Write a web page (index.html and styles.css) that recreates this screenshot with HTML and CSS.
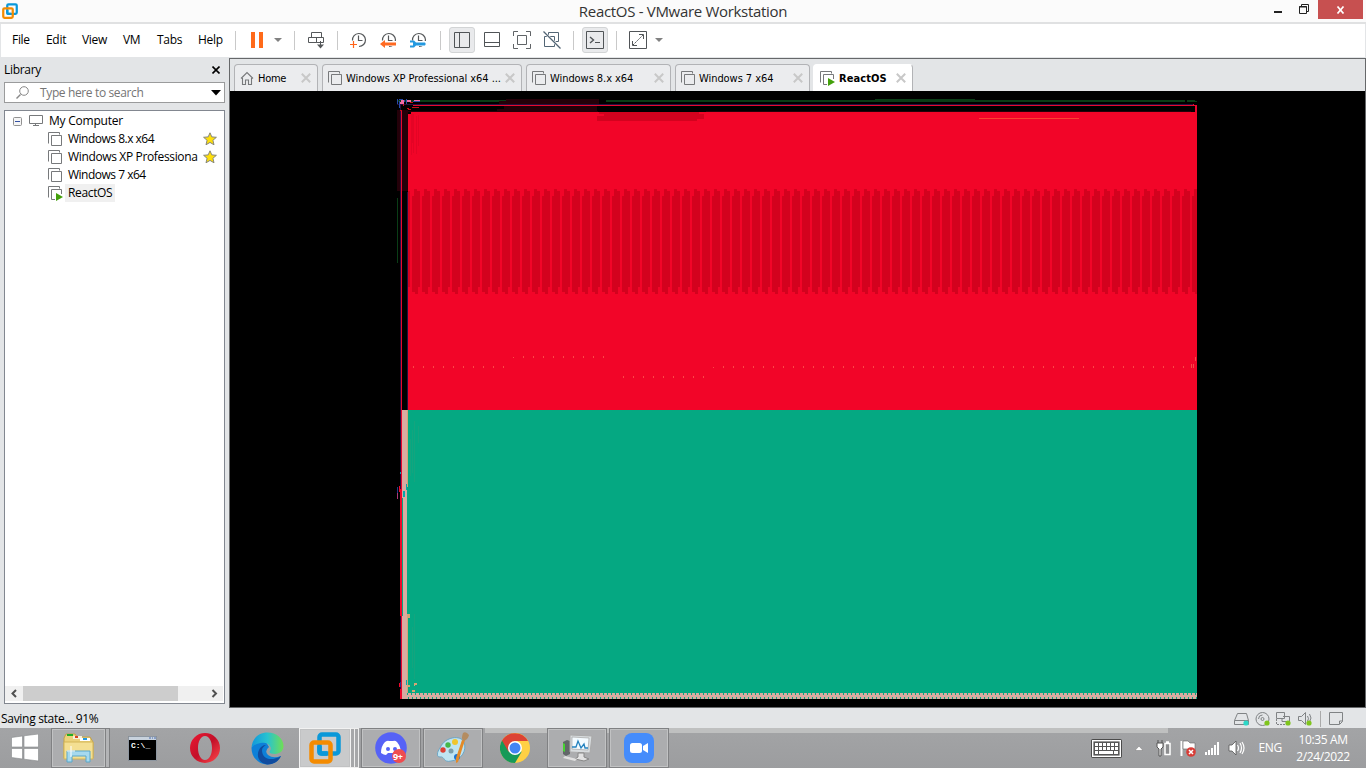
FILE: index.html
```html
<!DOCTYPE html>
<html lang="en">
<head>
<meta charset="utf-8">
<title>ReactOS - VMware Workstation</title>
<link rel="stylesheet" href="styles.css">
</head>
<body>
<svg class="defs" width="0" height="0" aria-hidden="true">
  <symbol id="vm" viewBox="0 0 15 15"><path d="M.5 11.5V.5h11v2M3.500 3.500h10v10h-10z" fill="none" stroke="#77797b"/></symbol>
  <symbol id="vmrun" viewBox="0 0 15 15"><path d="M.5 11.500V.5h11v2M7 13.500H3.500v-10h10V8" fill="none" stroke="#77797b"/><path d="M8 7l7 4-7 4z" fill="#43a00b"/></symbol>
  <symbol id="x" viewBox="0 0 10 10"><path d="M.8.8l8.400 8.400M9.200.8L.8 9.200" stroke="#c8c8c8" stroke-width="2"/></symbol>
  <symbol id="star" viewBox="0 0 14 14"><path d="M7 .8l1.800 4.100 4.600.4-3.500 3 1.100 4.500L7 10.400 3 12.800l1.100-4.500-3.500-3 4.600-.4z" fill="#ffdf0b" stroke="#85867a" stroke-width="1"/></symbol>
  <symbol id="logo" viewBox="0 0 32 32"><g fill="none" stroke-width="4.500"><rect x="10.500" y="2.500" width="19" height="19" rx="2.500" stroke="#0a98d9"/><rect x="2.500" y="10.500" width="19" height="19" rx="2.500" stroke="#f48b00"/><path d="M10.500 14v6q0 1.500 1.500 1.500h6" stroke="#0a98d9"/></g></symbol>
  <symbol id="clock" viewBox="0 0 17 17"><path d="M2.500 8.500A6.500 6.500 0 1 1 9 14.500M8.500 3.500v5h4" fill="none" stroke="#55585a" stroke-width="1.200"/></symbol>
</svg>

<header class="titlebar">
  <svg class="app-icon" width="16" height="16"><use href="#logo"/></svg>
  <span class="title">ReactOS - VMware Workstation</span>
  <svg class="win-min" width="8" height="3"><path d="M0 0h8v2H0z" fill="#222"/></svg>
  <svg class="win-max" width="10" height="10"><path d="M.5 2.500h7v7h-7zM0 3h8M2.500 2V.5h7v7H8" fill="none" stroke="#222"/></svg>
  <span class="win-close"><svg width="9" height="8"><path d="M1.500 .5l6 7M7.500 .5l-6 7" stroke="#fff" stroke-width="1.700"/></svg></span>
</header>

<nav class="menubar">
  <div class="menus"><span class="m-file">File</span><span class="m-edit">Edit</span><span class="m-view">View</span><span class="m-vm">VM</span><span class="m-tabs">Tabs</span><span>Help</span></div>
  <i class="sep first"></i>
  <svg class="g15" width="12" height="16"><path d="M0 0h4v16H0zM8 0h4v16H8z" fill="#ff6a1a"/></svg>
  <svg class="g11" width="8" height="4"><path d="M0 0h8L4 4z" fill="#818181"/></svg>
  <i class="sep"></i>
  <svg class="g13" width="17" height="17"><path d="M3.500.5h10v5h-10zM.5 5.500h8v5h-8zM8.500 5.500h7v5h-7zM12.500 9v6" fill="none" stroke="#55585a"/><path d="M9 12.500h7l-3.500 4z" fill="#55585a"/></svg>
  <i class="sep"></i>
  <svg class="clock" width="17" height="17"><use href="#clock"/><path d="M3.500 9v7M0 12.500h7" stroke="#ff6318" stroke-width="1.200"/></svg>
  <svg class="g13" width="17" height="17"><use href="#clock"/><path d="M0 9h17v5H0z" fill="#fff"/><path d="M0 12L5 8v2.500h11v3H5V16z" fill="#ff6a22"/></svg>
  <svg class="g13" width="17" height="17"><use href="#clock"/><path d="M0 9h17v5H0z" fill="#fff"/><path d="M0 8.500h4l2 2h9q1.500 1.500 0 3H6l-2 2H0v-2h3v-3H0z" fill="#2499e0"/></svg>
  <i class="sep g13"></i>
  <span class="tool-on g8"><svg width="16" height="16"><path d="M.5.500h15v15H.5zM5.500 1v14" fill="none" stroke="#505457"/></svg></span>
  <svg class="g9" width="17" height="16"><path d="M.5.500h15v14H.5zM1 10.500h14" fill="none" stroke="#505457"/></svg>
  <svg class="g12" width="18" height="18"><path d="M.5 5V.5H5M13 .5h4.500V5M17.500 13v4.500H13M5 17.500H.5V13M4.500 4.500h9v9h-9z" fill="none" stroke="#606467"/></svg>
  <svg class="g12" width="18" height="18"><path d="M5.500 1.500h10v9h-3M1.500 5.500h10v10h-10zM5.500 5V1.500" fill="none" stroke="#526574"/><path d="M.5.500l17 17" stroke="#fff" stroke-width="2.500"/><path d="M.5.500l17 17" stroke="#526574" stroke-width="1.200"/></svg>
  <i class="sep"></i>
  <span class="tool-on g8"><svg width="18" height="18"><path d="M.5.500h17v17H.5zM9 11.500h5" fill="none" stroke="#505457"/><path d="M4 6l3.500 3L4 12" fill="none" stroke="#505457" stroke-width="1.400"/></svg></span>
  <i class="sep g8"></i>
  <svg class="g12" width="18" height="18"><path d="M.5.500h17v17H.5z" fill="none" stroke="#505457"/><path d="M4 14L14 4" stroke="#505457" stroke-dasharray="2 1"/><path d="M3.500 10v4.500H8M10 3.500h4.500V8" fill="none" stroke="#505457"/></svg>
  <svg class="g8" width="8" height="4"><path d="M0 0h8L4 4z" fill="#818181"/></svg>
</nav>

<main class="workspace">
  <aside class="library">
    <div class="lib-head"><span>Library</span><svg width="8" height="8"><path d="M.5.500l7 7M7.500.500l-7 7" stroke="#000" stroke-width="1.600"/></svg></div>
    <div class="search"><svg width="13" height="13"><path d="M4.500 8.500L.5 12.500" stroke="#888" stroke-width="1.400"/><circle cx="8" cy="5" r="4.300" fill="none" stroke="#888"/></svg><span>Type here to search</span><svg width="10" height="6"><path d="M0 0h10L5 5.500z"/></svg></div>
    <div class="tree">
      <div class="node root"><svg width="9" height="9"><rect x=".5" y=".5" width="8" height="8" rx="1" fill="#f5f5f5" stroke="#919191"/><path d="M2 4.500h5" stroke="#3451a4"/></svg><svg class="pc" width="14" height="12"><path d="M.5.500h13v8H.5zM6.500 9v2M4 10.500h6" fill="none" stroke="#77797b"/></svg><span>My Computer</span></div>
      <div class="node tight"><svg width="15" height="15"><use href="#vm"/></svg><span>Windows 8.x x64</span><svg class="fav" width="14" height="14"><use href="#star"/></svg></div>
      <div class="node"><svg width="15" height="15"><use href="#vm"/></svg><span class="long">Windows XP Professiona</span><svg class="fav" width="14" height="14"><use href="#star"/></svg></div>
      <div class="node tight"><svg width="15" height="15"><use href="#vm"/></svg><span>Windows 7 x64</span></div>
      <div class="node"><svg width="15" height="15"><use href="#vmrun"/></svg><span class="selected">ReactOS</span></div>
      <div class="hscroll"><svg width="18" height="15"><path d="M11 4L7.500 7.500l3.500 3.500" fill="none" stroke="#505050" stroke-width="2"/></svg><i class="thumb"></i><svg width="18" height="15"><path d="M7.500 4L11 7.500 7.500 11" fill="none" stroke="#505050" stroke-width="2"/></svg></div>
    </div>
  </aside>

  <section class="viewer">
    <div class="tabs">
      <div class="tab home"><svg width="14" height="14"><path d="M1 7.500l6-6 6 6M2.500 7v6.500h3V9h3v4.500h3V7" fill="none" stroke="#77797b" stroke-width="1.100"/></svg><span>Home</span><svg width="10" height="10"><use href="#x"/></svg></div>
      <div class="tab xp"><svg width="15" height="15"><use href="#vm"/></svg><span>Windows XP Professional x64 ...</span><svg width="10" height="10"><use href="#x"/></svg></div>
      <div class="tab w8"><svg width="15" height="15"><use href="#vm"/></svg><span>Windows 8.x x64</span><svg width="10" height="10"><use href="#x"/></svg></div>
      <div class="tab w7"><svg width="15" height="15"><use href="#vm"/></svg><span>Windows 7 x64</span><svg width="10" height="10"><use href="#x"/></svg></div>
      <div class="tab active"><svg width="15" height="15"><use href="#vmrun"/></svg><span>ReactOS</span><svg width="10" height="10"><use href="#x"/></svg></div>
    </div>
    <svg class="display" width="1135" height="616" viewBox="230 91 1135 616" shape-rendering="crispEdges">
      <defs>
        <pattern id="bars" x="402" y="0" width="10" height="768" patternUnits="userSpaceOnUse"><path d="M2 189h3v2h3v96h-2v7H3v-2H0v-96h2z" fill="#d3021e"/></pattern>
        <pattern id="dots" x="403" y="0" width="10" height="768" patternUnits="userSpaceOnUse"><path d="M0 0h1v768H0z" fill="#fa4848"/></pattern>
        <pattern id="teeth" x="407" y="693" width="4" height="6" patternUnits="userSpaceOnUse"><path d="M0 0h4v6H0z" fill="#daaba1"/><path d="M0 0h1v2H0zM1 4h1v2H1z" fill="#05a882"/></pattern>
      </defs>
      <path d="M230 91h1135v616H230z"/>
      <path d="M397 100h109v1h-7v1H397zM606 100h269v-1h100v1h210v2H606zM1187 100h8v1h2v1h-10zM397 198h1v65h-1z" fill="#0a3d16"/>
      <path d="M506 99h93v5H499v-3h7zM504 106h93v5H497v-2h7zM397 110h11v81H397zM408 111h190v1H408zM706 111h485v1H706z" fill="#240009"/>
      <path d="M397 104h797v1H397zM400 105h1v594h-1zM407 192h1v218h-1z" fill="#24103f"/>
      <path d="M413 105h784v7h-2v-6H413zM401 110h1v589h-1zM1193 104h1v1h-1z" fill="#e7082e"/>
      <path d="M402 192h5v218h-5z"/>
      <path d="M411 112h786v298H408V114h3z" fill="#f20528"/>
      <path d="M599 112h100v2h5v5h-7v2H597v-5h7v-2h-5z" fill="#d3021e"/>
      <path d="M411 114h3v39h-1v-10h-1v12h-1zM416 116h1v38h-1zM418 115h1v31h-1z" fill="#e40425"/>
      <path d="M408 189h789v105H408z" fill="url(#bars)"/>
      <path d="M979 118h100v1H979z" fill="#fb4131"/>
      <path d="M413 366h91v2h-91zM513 357h1v1h-1zM523 356h81v2h-81zM623 376h81v2h-81zM713 367h1v1h-1zM723 366h462v2H723z" fill="url(#dots)"/>
      <path d="M1191 364h1v4h-1zM1193 364h1v4h-1zM1195 357h1v4h-1z" fill="#fa4848"/>
      <path d="M408 410h789v283H408zM402 487h6v206h-6z" fill="#05a882"/>
      <path d="M414 421h1v61h-1zM412 430h1v43h-1zM418 426h1v17h-1zM410 439h1v37h-1zM414 614h1v65h-1zM412 627h1v41h-1z" fill="#15a47e"/>
      <path d="M402 410h6v77h-1v212h-5v-83h1V498h-1z" fill="#daaba1"/>
      <path d="M407 614h3v4h-3z" fill="#d4a574"/>
      <path d="M407 693h790v6H407z" fill="url(#teeth)"/>
      <path d="M407 410h1v77h-1zM407 618h1v75h-1zM414 683h3v2h-2v1h-1zM412 690h3v2h-3zM407 685h3v2h-3z" fill="#d4a574"/>
      <path d="M400 489h2v127h-2zM399 486h1v6h-1zM400 689h2v10h-2zM399 683h1v4h-1z" fill="#ef082b"/>
      <path d="M397 487h1v6h-1zM400 682h1v5h-1z" fill="#26378b"/><path d="M397 493h1v6h-1z" fill="#af3877"/>
      <path d="M406 484h1v6h-1zM403 491h2v6h-2zM406 680h1v5h-1zM400 472h1v2h-1z" fill="#07a7ac"/>
      <path d="M397 99h1v5h-1zM399 99h4v1h-4zM399 101h1v7h-1zM404 100h1v2h-1zM406 99h1v5h-1zM413 101h7v1h-7z" fill="#274aa7"/><path d="M401 100h3v3h-3zM400 102h4v2h-4zM407 100h4v2h-4zM414 100h6v1h-6z" fill="#ef6aa5"/><path d="M410 102h3v1h-3zM412 107h7v1h-7zM407 108h2v1h-2zM408 109h3v1h-3zM400 110h2v1h-2zM403 104h1v2h-1z" fill="#c90c19"/>
    </svg>
  </section>
</main>

<div class="statusbar">
  <span>Saving state... 91%</span>
  <svg width="114" height="16" fill="none" stroke="#808385">
    <path d="M1.500 9.500l3-7h9l2 7v4h-14zM1.500 9.500h14"/><circle cx="13" cy="12" r="2.600" fill="#2cd8c7" stroke="none"/>
    <circle cx="29.500" cy="8" r="6.500"/><circle cx="29.500" cy="8" r="1.500"/><path d="M25.500 8a4 4 0 0 1 4-4"/><circle cx="34" cy="12" r="2.600" fill="#7fc41c" stroke="none"/>
    <path d="M43.500 1.500h8v6h-8zM50 5.500h6.500v5H49V8"/><path d="M43.500 8v5.500H52" stroke-dasharray="2 1"/><circle cx="55" cy="12" r="2.600" fill="#7fc41c" stroke="none"/>
    <path d="M65.500 5.500h3l4-4v12l-4-4h-3zM74.500 5q2 3 0 5M76.500 3q3 4 0 8"/><circle cx="76" cy="12" r="2.600" fill="#7fc41c" stroke="none"/>
    <path d="M87.500 0v16" stroke="#aaa"/><path d="M96.500 1.500h13v9l-3 3h-10zM106.500 13v-3h3"/>
  </svg>
</div>

<footer class="taskbar">
  <div class="launch start"><svg width="28" height="28"><path d="M.5 3.500l11-1.500v11H.5zM13 1.800L27.500 0v13H13zM.5 14.500h11v10.500L.5 23.500zM13 14.500h14.500V27L13 25.200z" fill="#fff" stroke="#85888a" stroke-width=".6"/></svg></div>
  <div class="launch boxed explorer"><svg width="32" height="30"><path d="M1 5l2-4h9l2 3h13l3 5v16H1z" fill="#ecd27b" stroke="#c1a149"/><path d="M4 1h6v2H4z" fill="#20ad27"/><path d="M10 3h9v3h-9z" fill="#f7f1da"/><path d="M12 3h3v2h-3z" fill="#d84222"/><path d="M17 5h10v3H17z" fill="#fff"/><path d="M20 5h4v2h-4z" fill="#2499df"/><path d="M1 9h29v17H1z" fill="#f4df92" stroke="#d3b557"/><path d="M4 29V18h23v11h-4v-6H9v6z" fill="#a6d9ee" stroke="#5aa7c9"/><path d="M8 13v11M4 18h8" stroke="#fff"/></svg></div>
  <i class="stack"></i>
  <div class="launch cmd"><svg width="29" height="25"><path d="M.5.500h28v24H.5z" stroke="#8d96a0"/><path d="M1 1h27v3H1z" fill="#c8d2dd"/><path d="M21 2h2M24 2h1M26 2h2" stroke="#496bb0"/><text x="3" y="12" class="prompt">C:\_</text></svg></div>
  <div class="launch opera"><svg width="30" height="30"><defs><linearGradient id="og" x2="1" y2="1"><stop stop-color="#ed1832"/><stop offset=".5" stop-color="#c31029"/><stop offset="1" stop-color="#ff4b4d"/></linearGradient></defs><path fill-rule="evenodd" d="M15 0a15 15 0 1 0 0 30a15 15 0 1 0 0-30zM15 3c4.500 0 7 6 7 12s-2.500 12-7 12S8 21 8 15 10.500 3 15 3z" fill="url(#og)"/></svg></div>
  <div class="launch edge"><svg width="33" height="33"><defs><linearGradient id="eg"><stop stop-color="#1297db"/><stop offset=".5" stop-color="#28c3d0"/><stop offset="1" stop-color="#70df54"/></linearGradient></defs><path d="M.5 16C3 9 10 7 15 10l3 5q-5 4-1 8 5 4 13 1-4 8-13.500 8.500C7 32.500 .5 25 .5 16z" fill="#0d80d8"/><path d="M.5 16C1 6 8 .5 16.500.500c9 0 16 6 16 13.500 0 6-5 8-9 8-3 0-5-1-5-2 0-1 2-2 1-5-1.500-4-6-5-10-4-5 1-8 3-9 5z" fill="url(#eg)"/><path d="M11 18c0 9 9 12 19 6-2 5-8 9-14 8.500C8 31 5 24 8 18c1-3 4-5 7-5-2 1-4 3-4 5z" fill="#104c9f"/></svg></div>
  <div class="launch boxed vmware"><svg width="32" height="32"><use href="#logo"/></svg></div>
  <i class="stack bright"></i><i class="stack bright"></i>
  <div class="launch boxed wide discord"><svg width="32" height="32"><circle cx="16" cy="16" r="15.800" fill="#5662f6"/><path d="M10 10q3-2 4-1h4q2-1 4 1 4 5 4 11-3 2-5 2l-2-2h-6l-2 2q-2 0-5-2 0-7 4-11z" fill="#fff"/><circle cx="13" cy="17" r="2" fill="#5662f6"/><circle cx="20" cy="17" r="2" fill="#5662f6"/><circle cx="24" cy="24" r="7" fill="#ef4c50"/><text x="18" y="28" class="badge">9+</text></svg></div>
  <div class="launch boxed wide paint"><svg width="33" height="32"><path d="M3 16C8 4 24 3 27 10c3 8-2 18-13 19-8 2-6-5-11-4-4 0-3-5 0-9z" fill="#bfe4f2" stroke="#6da6c5"/><circle cx="6" cy="18" r="2.700" fill="#db4135"/><circle cx="11" cy="13" r="2.700" fill="#45b84a"/><circle cx="18" cy="10" r="3" fill="#f0c52e"/><circle cx="14" cy="19" r="2.500" fill="#799daa"/><circle cx="20" cy="25" r="3" fill="#1d74cf"/><path d="M28 8l-7 22-2 1v-5l6-18z" fill="#e38a28"/><path d="M26 1q3-2 6 2-1 5-6 6-2-3 0-8z" fill="#b48c60"/></svg></div>
  <div class="launch chrome"><svg width="30" height="30"><circle cx="15" cy="15" r="15" fill="#ffd044"/><path d="M2 7.500A15 15 0 0 0 15 30l6.500-11L15 7.500z" fill="#169a58"/><path d="M2 7.500L8.500 18.700 15 8h13A15 15 0 0 0 2 7.500z" fill="#dc4334"/><circle cx="15" cy="15" r="7" fill="#fff"/><circle cx="15" cy="15" r="5.500" fill="#4285f4"/></svg></div>
  <div class="launch boxed wide monitor"><svg width="31" height="28"><path d="M1 8l4-2 3 1v13l-4 2-3-2z" fill="#626769"/><path d="M1 9l2 1v8l-2-1z" fill="#46d431"/><path d="M8 1l22 1-2 17-20-1z" fill="#d8dcde" stroke="#aaa"/><path d="M10 3l17 1-1 12-16-1z" fill="#f4fbff" stroke="#999" stroke-width=".6"/><path d="M10 13h4l2-6 3 7 3-4 1 4h3" fill="none" stroke="#2482bf" stroke-width="1.300"/><path d="M16 19h6v4l5 2-5 2-9-2 3-2z" fill="#e2e2e2" stroke="#888"/><path d="M3 22l12 3-2 2-12-3z" fill="#e0e0e0"/></svg></div>
  <div class="launch boxed wide zoomapp"><svg width="30" height="30"><rect width="30" height="30" rx="8" fill="#458cfb"/><rect x="6" y="10" width="12" height="10" rx="2.500" fill="#fff"/><path d="M19 13l5-3v10l-5-3z" fill="#fff"/></svg></div>
  <div class="tray">
    <svg class="keyboard" width="31" height="19"><rect x=".5" y=".5" width="30" height="18" rx="1" fill="#555" stroke="#4b4b4b"/><rect x="1.700" y="1.700" width="27.600" height="15.600" fill="none" stroke="#fff" stroke-width="1.400"/><path d="M4 5.500h23M4 9.500h23" stroke="#fff" stroke-width="3" stroke-dasharray="3 1"/><path d="M4 13.500h3m1 0h14m1 0h4" stroke="#fff" stroke-width="3"/></svg>
    <svg class="up" width="8" height="5"><path d="M0 4.500L4 0l4 4.500z" fill="#fff" stroke="#777" stroke-width=".5"/></svg>
    <svg class="battery" width="16" height="17"><path d="M1 3h6v4L5 9v7H3V9L1 7zM2 0v3M6 0v3" fill="#fff" stroke="#555"/><path d="M9 3.500h5v11H9zM10 2h3" fill="#8c8d8f" stroke="#fff" stroke-width="1.500"/></svg>
    <svg class="flag" width="16" height="17"><path d="M1.500 1v15" stroke="#fff" stroke-width="2"/><path d="M3 1h5l2 2h5v8H9L7 9H3z" fill="#fff" stroke="#666" stroke-width=".6"/><circle cx="11" cy="12" r="4.800" fill="#d83d37"/><path d="M9 10l4 4m0-4l-4 4" stroke="#fff" stroke-width="1.500"/></svg>
    <svg class="signal" width="16" height="13"><path d="M1 10h2v3H1zM4 8h2v5H4zM7 6h2v7H7zM10 3h2v10h-2zM13 0h2v13h-2z" fill="#fff"/></svg>
    <svg class="sound" width="17" height="15"><path d="M1 4h3l4-4v14l-4-4H1z" fill="#fff" stroke="#555" stroke-width=".8"/><path d="M9.500 4q2 3 0 6M12 2q3 5 0 10M14 1q4 6 0 12" fill="none" stroke="#fff" stroke-width="1.200"/></svg>
    <span class="lang">ENG</span>
    <span class="time">10:35 AM<br>2/24/2022</span>
  </div>
</footer>
</body>
</html>
```
FILE: styles.css
```css
* { box-sizing: border-box; }
body { margin: 0; width: 1366px; height: 768px; overflow: hidden; display: flex; flex-direction: column; background: #e3e5e7; color: #000; font: 12px/18px "Open Sans", "Noto Sans", sans-serif; letter-spacing: -.3px; }
svg { display: block; flex: none; }
.defs { position: absolute; }

.titlebar { height: 24px; flex: none; display: flex; align-items: flex-start; background: #fbfbfb; border-bottom: 2px solid #e0e1e2; }
.app-icon { margin: 3px 0 0 2px; }
.title { width: 1256px; text-align: center; padding-left: 74px; font-size: 15px; line-height: 23px; color: #333; letter-spacing: -.31px; white-space: nowrap; }
.win-min { margin: 11px 0 0 0; }
.win-max { margin: 4px 0 0 17px; }
.win-close { margin-left: auto; margin-right: 3px; width: 45px; height: 19px; background: #c75050; display: grid; place-items: center; flex: none; }

.menubar { height: 34px; flex: none; display: flex; align-items: center; background: #fff; border: solid #e3e5e7; border-width: 0 1px 1px; padding-bottom: 1px; }
.menus { width: 234px; padding-left: 11px; display: flex; flex: none; }
.m-file { width: 34px; }
.m-edit { width: 36px; }
.m-view { width: 41px; }
.m-vm { width: 34px; }
.m-tabs { width: 41px; }
.sep { width: 1px; height: 19px; background: #c9c9c9; margin-left: 12px; flex: none; }
.sep.first { margin-left: 0; }
.clock { margin-left: 12px; }
.g8, .sep.g8 { margin-left: 8px; }
.g9 { margin-left: 9px; }
.g11 { margin-left: 11px; }
.g12 { margin-left: 12px; }
.g13, .sep.g13 { margin-left: 13px; }
.g15 { margin-left: 15px; }
.tool-on { width: 26px; height: 26px; flex: none; display: grid; place-items: center; background: #e9eaec; border: 1px solid #d2d4d5; border-radius: 3px; }

.workspace { height: 650px; flex: none; display: flex; }
.library { width: 229px; padding: 0 4px; display: flex; flex-direction: column; }
.lib-head { height: 24px; display: flex; align-items: center; justify-content: space-between; padding-right: 5px; }
.search { height: 21px; flex: none; display: flex; align-items: center; background: #fff; border: 1px solid #9a9b9c; color: #757575; padding: 0 3px 0 11px; letter-spacing: -.37px; }
.search span { margin-left: 11px; flex: 1; }
.tree { margin-top: 7px; height: 594px; background: #fff; border: 1px solid #828790; padding-top: 1px; display: flex; flex-direction: column; }
.library .search, .library .tree { width: 221px; }
.node { height: 18px; flex: none; display: flex; align-items: center; padding-left: 43px; white-space: nowrap; }
.node.root { padding-left: 8px; }
.pc { margin-left: 7px; }
.node span { margin-left: 2px; padding: 0 3px; letter-spacing: -.35px; }
.node.root span { margin-left: 6px; padding: 0; letter-spacing: -.22px; }
.node.tight span { letter-spacing: -.5px; }
.node .fav { margin-left: auto; margin-right: 7px; }
.node .selected { background: #f0f0f0; }
.hscroll { height: 15px; margin: auto 1px 2px 0; display: flex; background: #f0f0f0; }
.thumb { width: 155px; background: #cdcdcd; margin-right: auto; }

.viewer { width: 1137px; border: 1px solid #66686a; background: #e3e5e7; }
.tabs { height: 32px; padding: 5px 0 0 4px; display: flex; gap: 4px; font: 11px/16px "DejaVu Sans Condensed", "DejaVu Sans", sans-serif; letter-spacing: -.06px; }
.tab { height: 27px; display: flex; align-items: center; padding: 0 6px 0 5px; background: #ebecee; border: 1px solid #b2b3b6; border-bottom: 0; border-radius: 4px 4px 0 0; white-space: nowrap; }
.tab svg:last-child { margin-left: auto; }
.tab span { margin-left: 3px; padding-top: 1px; }
.home { width: 84px; letter-spacing: -.3px; }
.home span { margin-left: 4px; }
.xp { width: 200px; }
.w8 { width: 145px; }
.w7 { width: 135px; }
.active { width: 100px; margin-left: -1px; padding-left: 6px; background: #fff; font-weight: bold; letter-spacing: .1px; border-color: #fff #b2b3b6 #fff #fff; }
.active span { margin-left: 4px; }

.statusbar { height: 20px; flex: none; display: flex; align-items: center; justify-content: space-between; padding: 2px 19px 0 1px; letter-spacing: -.3px; }

.taskbar { height: 40px; flex: none; display: flex; background: linear-gradient(#bfc0c0, #bfc0c0) 485px 0 / 683px 5px no-repeat, linear-gradient(#a3a4a6, #9c9d9f); }
.launch { height: 40px; display: grid; place-items: center; flex: none; }
.boxed { border: 1px solid #808183; box-shadow: inset 0 0 0 1px #c1c2c3; background: #acadaf; }
.start { width: 51px; padding-right: 2px; }
.explorer { width: 55px; }
.stack { width: 4px; flex: none; border: solid #808183; border-width: 1px 1px 1px 0; background: #b3b4b6; }
.stack.bright { border-color: #eee; background: #a6a7a9; }
.cmd { width: 65px; }
.prompt { font: bold 8px "Liberation Mono", monospace; fill: #fff; letter-spacing: 0; }
.opera { width: 61px; padding-right: 2px; }
.edge { width: 63px; padding-right: 1px; }
.vmware { width: 52px; border-color: #f2f2f2; background: #c9cacb; }
.wide { width: 60px; margin-right: 2px; }
.discord { margin-left: 2px; }
.badge { font: bold 9px "Open Sans", sans-serif; fill: #fff; }
.chrome { width: 62px; padding-right: 3px; }
.tray { margin-left: auto; padding-right: 15px; display: flex; align-items: center; color: #fff; }
.up { margin-left: 13px; }
.battery { margin-left: 13px; }
.flag { margin-left: 8px; }
.signal { margin-left: 8px; }
.sound { margin-left: 8px; }
.lang { margin-left: 13px; }
.time { margin-left: 11px; width: 58px; padding-left: 2px; text-align: center; line-height: 17px; letter-spacing: -.37px; white-space: nowrap; }
```
